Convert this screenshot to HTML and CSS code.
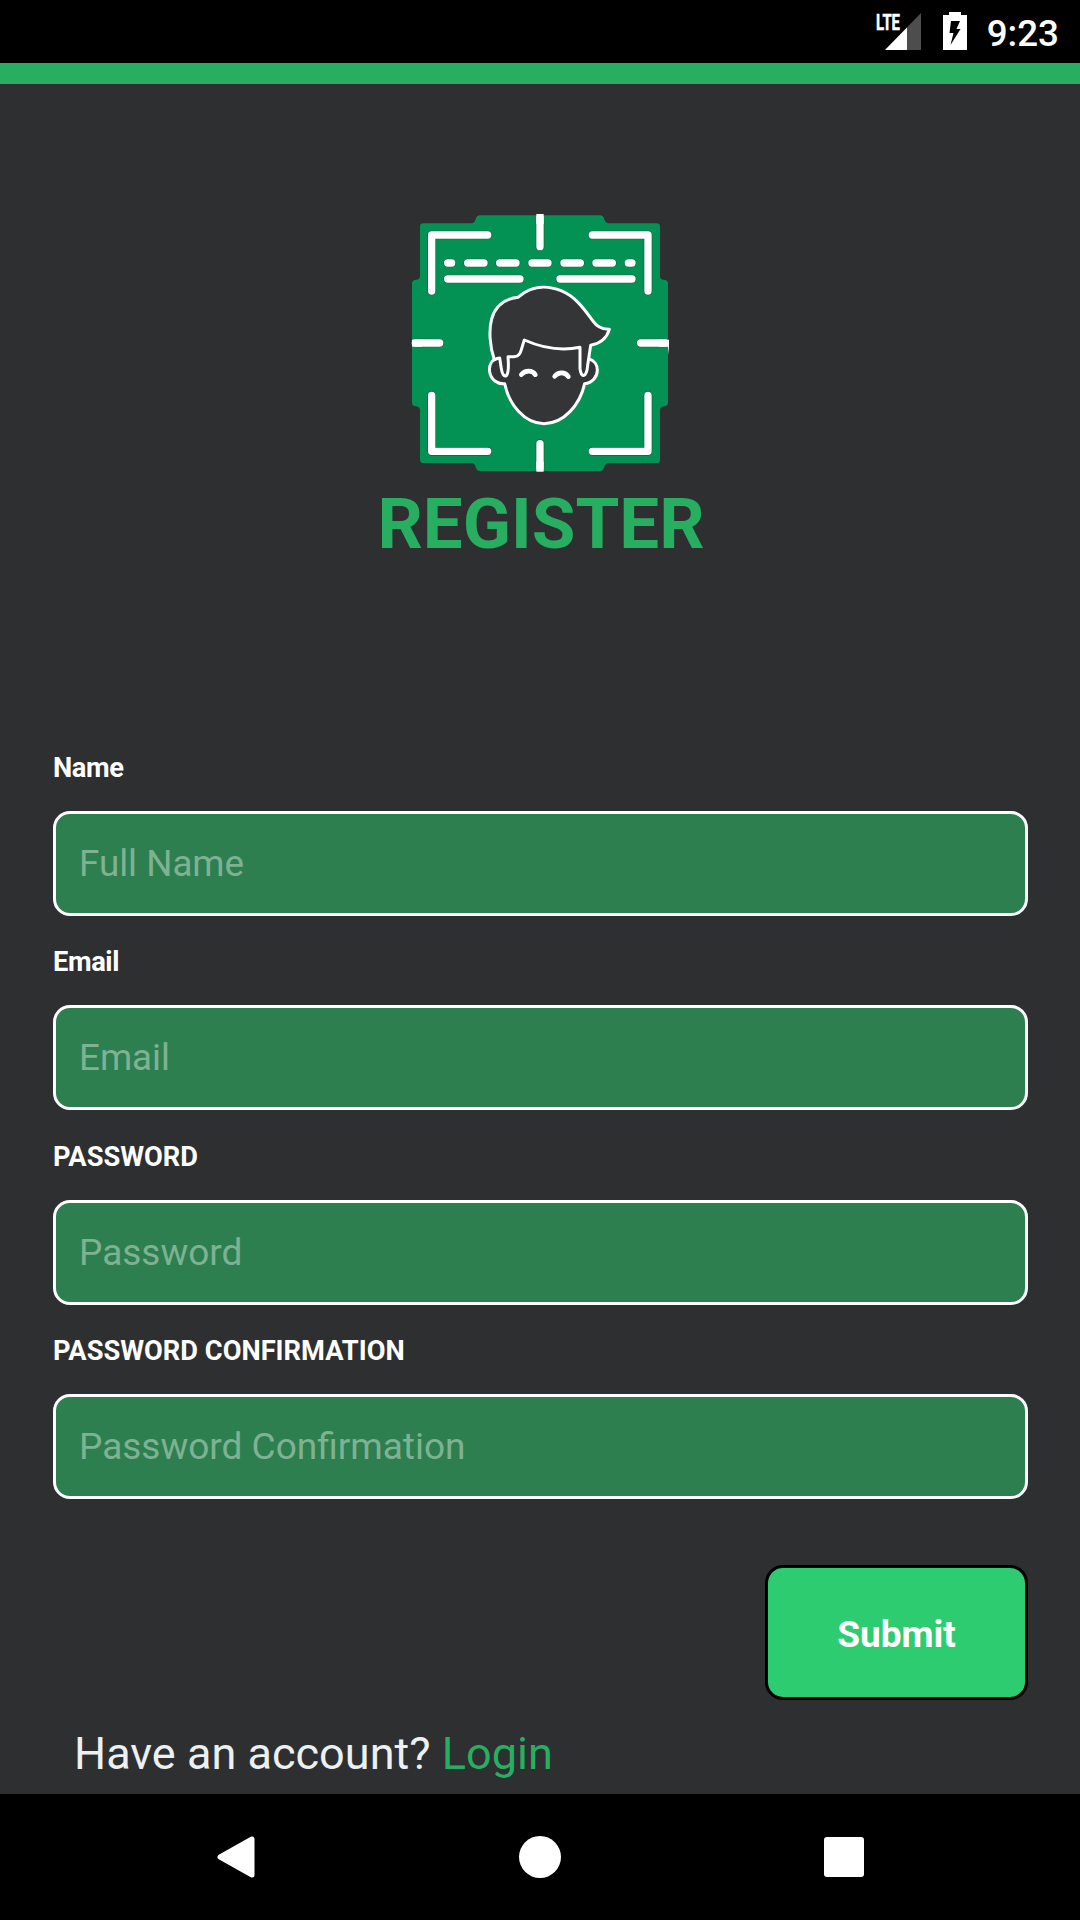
FILE: index.html
```html
<!DOCTYPE html>
<html lang="en">

<head>
  <meta charset="UTF-8">
  <meta name="viewport" content="width=device-width, initial-scale=1.0">
  <title>Register</title>
  <link rel="stylesheet" href="styles.css">
</head>

<body>
  <div class="status-bar">
    <svg class="signal" width="46" height="40" viewBox="0 0 46 40">
      <path d="M46 2V39H10Z" fill="#4d4d4d"/>
      <path d="M32 16.5V39H10Z" fill="#fff"/>
      <text x="1" y="18.5" textLength="24" lengthAdjust="spacingAndGlyphs">LTE</text>
    </svg>
    <svg class="battery" width="24" height="38" viewBox="0 0 24 38">
      <path d="M6 0H18V3H24V38H0V3H6Z" fill="#fff"/>
      <path d="M8 9H17L13.500 17H17.500L7.500 33L10.500 21H6.500Z" fill="#000"/>
    </svg>
    <span class="clock">9:23</span>
  </div>

  <main>
    <header>
      <svg class="logo" width="280" height="270" viewBox="0 0 840 810">
        <path fill="#039253" d="M240 31H600Q610 31 613 43Q617 55 627 55H770Q780 55 780 65V212Q780 223 791 224Q804 225 804 234V594Q804 603 792 604Q780 606 780 616V764Q780 774 770 774H627Q616 774 613 786Q610 798 600 798H240Q230 798 227 786Q224 774 214 774H70Q60 774 60 764V616Q60 606 48 604Q36 603 36 594V234Q36 225 49 224Q60 223 60 212V65Q60 55 70 55H214Q224 55 227 43Q230 31 240 31Z"/>
        <g class="outline">
          <path d="M95 258V90H263M577 90H744V258M95 571V739H263M577 739H744V571"/>
          <path d="M143 174H155M203 174H252M299 174H348M396 174H444M492 174H541M588 174H637M685 174H696"/>
          <path d="M143 222H360M480 222H696"/>
          <path d="M420 45V125M420 716V784M50 414H119M722 414H790"/>
        </g>
        <g class="lines">
          <path d="M95 258V90H263M577 90H744V258M95 571V739H263M577 739H744V571"/>
          <path d="M143 174H155M203 174H252M299 174H348M396 174H444M492 174H541M588 174H637M685 174H696"/>
          <path d="M143 222H360M480 222H696"/>
          <path d="M420 38V125M420 716V788M46 414H119M722 414H796"/>
        </g>
        <g fill="#fff">
          <rect x="409" y="27" width="22" height="30"/>
          <rect x="409" y="770" width="22" height="30"/>
          <rect x="36" y="404" width="30" height="21"/>
          <path d="M776 404H807V450L804 425H776Z"/>
        </g>
        <g class="face">
          <path d="M295 460C274 464 266 481 269 501C273 524 292 538 314 536C327 599 374 656 432 656C491 656 540 600 554 536C576 534 592 516 592 496C592 480 583 466 567 462L540 370H320Z"/>
          <path d="M283 464C269 424 266 374 275 342C285 304 314 281 354 277C392 243 439 239 483 257C523 273 547 305 573 340C589 363 603 374 628 373C620 400 598 416 572 421L563 481C560 518 543 521 540 491V427C487 438 427 429 373 405C363 432 364 455 342 455H324C326 480 326 505 319 512C312 516 306 506 304 491L299 459C293 459 288 461 283 464Z"/>
          <path class="eyes" d="M364 509C375 495 397 495 406 509M464 514C475 500 496 500 505 515"/>
        </g>
      </svg>
      <h1>REGISTER</h1>
    </header>

    <form onsubmit="return false">
      <div class="field">
        <label for="name" class="tight">Name</label>
        <input type="text" id="name" placeholder="Full Name">
      </div>
      <div class="field">
        <label for="email" class="tight">Email</label>
        <input type="email" id="email" placeholder="Email">
      </div>
      <div class="field">
        <label for="password">PASSWORD</label>
        <input type="password" id="password" placeholder="Password">
      </div>
      <div class="field">
        <label for="confirmation">PASSWORD CONFIRMATION</label>
        <input type="password" id="confirmation" placeholder="Password Confirmation">
      </div>
      <button type="submit">Submit</button>
    </form>

    <p class="account">Have an account? <a href="#">Login</a></p>
  </main>

  <nav class="nav-bar">
    <svg width="44" height="44" viewBox="0 0 44 44">
      <path d="M6 22L38 4V40Z" stroke-width="5"/>
    </svg>
    <svg width="44" height="44" viewBox="0 0 44 44">
      <circle cx="22" cy="22" r="21"/>
    </svg>
    <svg width="44" height="44" viewBox="0 0 44 44">
      <rect x="2" y="2" width="40" height="40" rx="3"/>
    </svg>
  </nav>
</body>

</html>
```

FILE: styles.css
```css
* {
  box-sizing: border-box;
}

body {
  margin: 0;
  height: 1920px;
  display: flex;
  flex-direction: column;
  overflow: hidden;
  font-family: Roboto, sans-serif;
  background-color: #2e2f31;
  color: #fff;
}

.status-bar {
  height: 63px;
  flex: none;
  display: flex;
  align-items: center;
  justify-content: flex-end;
  padding-right: 21px;
  background-color: #000;
}

.signal {
  margin-right: 22px;
  margin-bottom: 1px;
}

.signal text {
  fill: #fff;
  stroke: #fff;
  stroke-width: 0.5px;
  font-size: 22px;
  font-weight: 700;
}

.battery {
  margin-right: 20px;
  margin-bottom: 1px;
}

.clock {
  font-size: 36.75px;
  font-weight: 500;
  line-height: 43px;
  padding-top: 3px;
}

main {
  flex: 1;
  border-top: 21px solid #27ae60;
  padding: 121px 52px 0 53px;
}

header {
  height: 541px;
  display: flex;
  flex-direction: column;
  align-items: center;
  padding-right: 1px;
}

.logo {
  flex: none;
}

.outline,
.lines,
.face {
  fill: none;
  stroke-linecap: round;
  stroke-linejoin: round;
}

.outline {
  stroke: #14633f;
  stroke-width: 26px;
}

.lines {
  stroke: #fff;
  stroke-width: 22px;
}

.face {
  fill: #333537;
  stroke: #fff;
  stroke-width: 9px;
}

.eyes {
  fill: none;
  stroke-width: 14px;
}

h1 {
  margin: 7px 0 0 2px;
  font-size: 70.9px;
  line-height: 84px;
  font-weight: 700;
  color: #27ae60;
}

form {
  display: flex;
  flex-direction: column;
}

.field {
  height: 194.4px;
}

label {
  display: block;
  height: 65px;
  padding-top: 6px;
  font-size: 27.25px;
  line-height: 32px;
  font-weight: 700;
}

.tight {
  letter-spacing: -0.4px;
}

input {
  display: block;
  width: 975px;
  height: 105px;
  padding: 0 23px;
  border: 3px solid #fff;
  border-radius: 17px;
  background-color: #2e7f50;
  color: #fff;
  font-family: inherit;
  font-size: 36.75px;
}

input[type="password"] {
  font-size: 37px;
}

input::placeholder {
  color: #7fb293;
  opacity: 1;
}

button {
  align-self: flex-end;
  width: 263px;
  height: 135px;
  margin-top: 41px;
  padding: 5px 0 0;
  border: 3px solid #000;
  border-radius: 18px;
  background-color: #2ecc71;
  color: #fff;
  font-family: inherit;
  font-size: 37px;
  font-weight: 700;
}

.account {
  margin: 27px 0 0 21px;
  font-size: 45.05px;
  line-height: 54px;
  color: #ecf0f1;
}

.account a {
  color: #27ae60;
  text-decoration: none;
}

.nav-bar {
  height: 126px;
  flex: none;
  display: flex;
  align-items: center;
  justify-content: space-between;
  padding: 0 214px;
  background-color: #000;
}

.nav-bar svg {
  fill: #fff;
  stroke: #fff;
  stroke-width: 0;
  stroke-linejoin: round;
}
```
